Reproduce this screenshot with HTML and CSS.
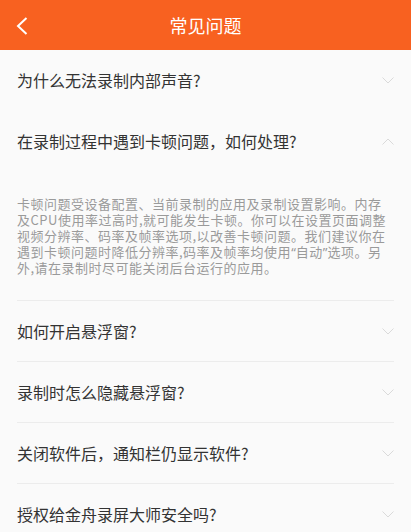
FILE: index.html
```html
<!DOCTYPE html>
<html lang="zh-CN">
<head>
    <meta charset="UTF-8">
    <meta name="viewport" content="width=device-width, initial-scale=1.0">
    <title>常见问题</title>
    <link rel="stylesheet" href="styles.css">
</head>
<body>

    <header class="topbar">
        <a class="back" href="#">
            <svg width="12" height="18" viewBox="0 0 12 18">
                <polyline points="10.5,1 2,9 10.5,17" fill="none" stroke="#fff" stroke-width="2"/>
            </svg>
        </a>
        <h1 class="title">常见问题</h1>
    </header>

    <ul class="faq">
        <li class="item no-line">
            <div class="question">
                <span>为什么无法录制内部声音?</span>
                <svg class="arrow" width="12" height="7" viewBox="0 0 12 7"><polyline points="0.5,0.5 6,6 11.5,0.5"/></svg>
            </div>
        </li>
        <li class="item open">
            <div class="question">
                <span>在录制过程中遇到卡顿问题，如何处理?</span>
                <svg class="arrow" width="12" height="7" viewBox="0 0 12 7"><polyline points="0.5,6.5 6,1 11.5,6.5"/></svg>
            </div>
            <p class="answer">卡顿问题受设备配置、当前录制的应用及录制设置影响。内存<br>及CPU使用率过高时,就可能发生卡顿。你可以在设置页面调整<br>视频分辨率、码率及帧率选项,以改善卡顿问题。我们建议你在<br>遇到卡顿问题时降低分辨率,码率及帧率均使用<span class="quote">“</span>自动<span class="quote">”</span>选项。另<br>外,请在录制时尽可能关闭后台运行的应用。</p>
        </li>
        <li class="item">
            <div class="question">
                <span>如何开启悬浮窗?</span>
                <svg class="arrow" width="12" height="7" viewBox="0 0 12 7"><polyline points="0.5,0.5 6,6 11.5,0.5"/></svg>
            </div>
        </li>
        <li class="item">
            <div class="question">
                <span>录制时怎么隐藏悬浮窗?</span>
                <svg class="arrow" width="12" height="7" viewBox="0 0 12 7"><polyline points="0.5,0.5 6,6 11.5,0.5"/></svg>
            </div>
        </li>
        <li class="item">
            <div class="question">
                <span>关闭软件后，通知栏仍显示软件?</span>
                <svg class="arrow" width="12" height="7" viewBox="0 0 12 7"><polyline points="0.5,0.5 6,6 11.5,0.5"/></svg>
            </div>
        </li>
        <li class="item">
            <div class="question">
                <span>授权给金舟录屏大师安全吗?</span>
                <svg class="arrow" width="12" height="7" viewBox="0 0 12 7"><polyline points="0.5,0.5 6,6 11.5,0.5"/></svg>
            </div>
        </li>
    </ul>

</body>
</html>
```

FILE: styles.css
```css
body {
    font-family: "Noto Sans CJK SC", "Noto Sans", sans-serif;
    background-color: #fafafa;
    margin: 0;
    padding: 0;
    overflow: hidden;
}

.topbar {
    height: 50px;
    background-color: #f86120;
    display: flex;
    align-items: center;
    justify-content: center;
    position: relative;
}

.back {
    position: absolute;
    left: 16px;
    top: 17px;
    display: flex;
}

.title {
    margin: 0;
    font-size: 18px;
    font-weight: normal;
    color: #fff;
}

.faq {
    list-style-type: none;
    margin: 0;
    padding: 0 17px;
}

.item {
    border-bottom: 1px solid #ececec;
}

.item.no-line {
    border-bottom-color: transparent;
}

.question {
    height: 60px;
    display: flex;
    align-items: center;
    justify-content: space-between;
    font-size: 16px;
    color: #333;
}

.arrow {
    fill: none;
    stroke: #dadada;
    stroke-width: 1;
}

.answer {
    margin: 0;
    padding: 25px 0 24px;
    font-size: 13px;
    letter-spacing: 0.5px;
    line-height: 16px;
    color: #9a9a9a;
    white-space: nowrap;
}

.answer .quote {
    font-family: "Noto Sans", sans-serif;
    letter-spacing: 0;
}
```
